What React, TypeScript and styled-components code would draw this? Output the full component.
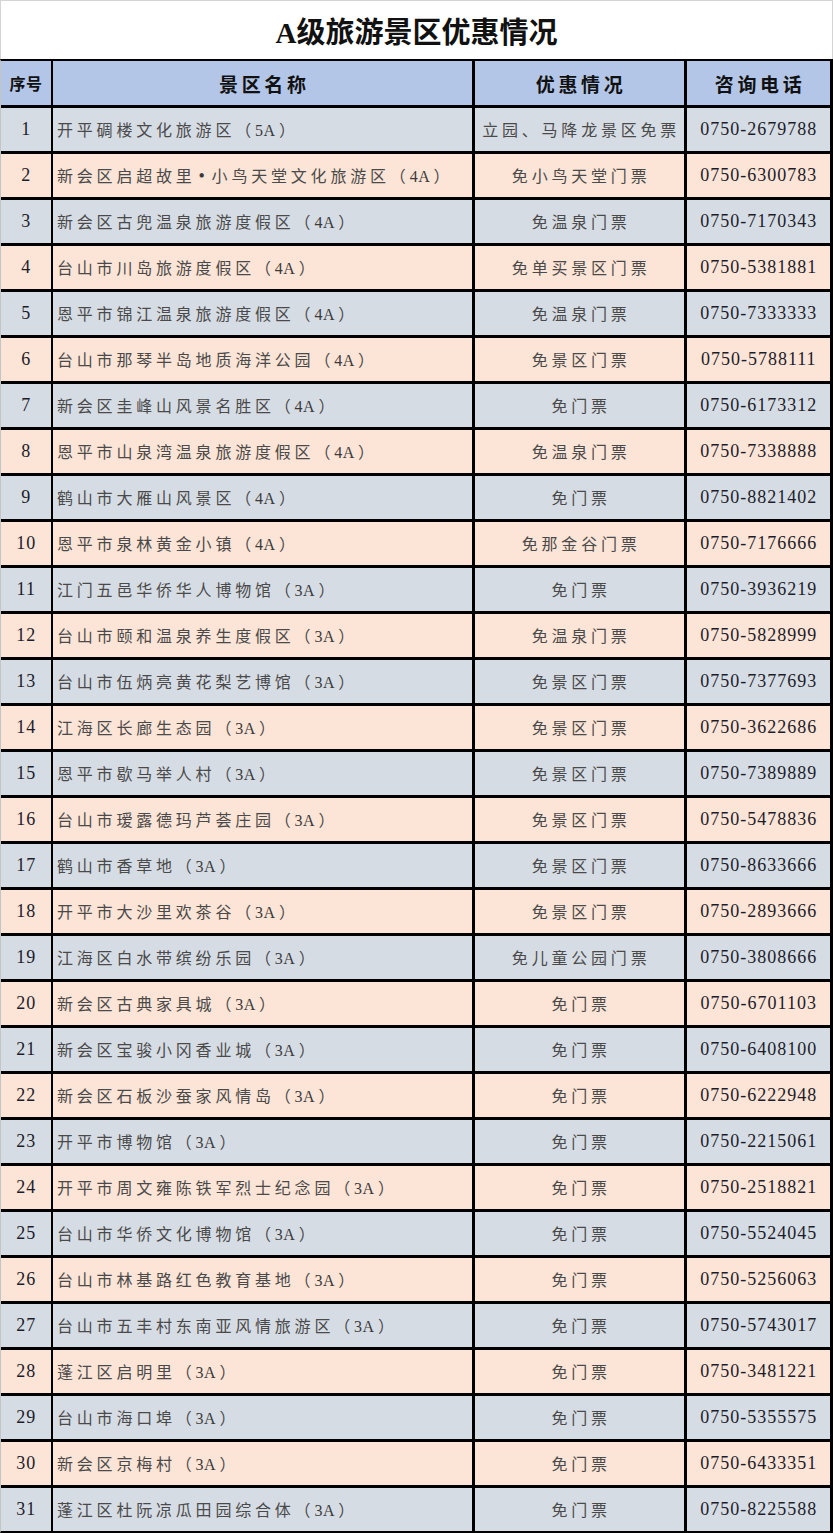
import React from 'react';
import styled, { createGlobalStyle } from 'styled-components';

type Spot = {
  name: string;
  offer: string;
  phone: string;
};

const GlobalStyle = createGlobalStyle`
  html, body {
    margin: 0;
    padding: 0;
    background: #ffffff;
  }
`;

const Page = styled.div`
  width: 833px;
  height: 1533px;
  overflow: hidden;
  font-family: 'Liberation Serif', 'Noto Sans CJK SC', serif;
  background: #ffffff;
`;

const Title = styled.h1`
  margin: 0;
  height: 59px;
  box-sizing: border-box;
  border: 1px solid #d4d4d4;
  border-bottom: none;
  display: flex;
  align-items: center;
  justify-content: center;
  font-size: 29px;
  font-weight: bold;
  color: #111111;
`;

const Table = styled.div`
  display: flex;
  flex-direction: column;
  gap: 2.5px;
  background: #000000;
  border-top: 2.5px solid #000000;
  border-bottom: 2px solid #000000;
  border-left: 1px solid #c4c4c4;
`;

const Row = styled.div<{ height: number }>`
  display: grid;
  grid-template-columns: 49.5px 419px 209.5px 143.5px;
  column-gap: 2.5px;
  height: ${({ height }) => height}px;
  padding-right: 3px;
`;

const Cell = styled.div<{ bg: string; align?: 'left' | 'center' }>`
  background: ${({ bg }) => bg};
  display: flex;
  align-items: center;
  justify-content: ${({ align }) => (align === 'left' ? 'flex-start' : 'center')};
  padding-left: ${({ align }) => (align === 'left' ? '4px' : '0')};
  white-space: nowrap;
  overflow: hidden;
`;

const HeadText = styled.span<{ size: number; spacing: number }>`
  font-size: ${({ size }) => size}px;
  font-weight: bold;
  color: #111111;
  letter-spacing: ${({ spacing }) => spacing}px;
  margin-right: -${({ spacing }) => spacing}px;
`;

const CnText = styled.span`
  font-size: 16px;
  color: #4a4a4a;
  letter-spacing: 3.8px;
`;

const CenteredCn = styled(CnText)`
  margin-right: -3.8px;
`;

const Ascii = styled.span`
  letter-spacing: 0.5px;
  margin-right: 3.3px;
  color: #3a3a3a;
`;

const Dot = styled.span`
  display: inline-block;
  width: 16px;
  text-align: center;
  font-size: 18px;
  line-height: 1;
  color: #3a3a3a;
`;

const NumText = styled.span`
  font-size: 18px;
  color: #1c1c2a;
  letter-spacing: 1px;
  margin-right: -1px;
`;

const HEAD_BG = '#b4c6e7';
const GRAY_BG = '#d6dce4';
const PEACH_BG = '#fce4d6';

const spots: Spot[] = [
  { name: '开平碉楼文化旅游区（5A）', offer: '立园、马降龙景区免票', phone: '0750-2679788' },
  { name: '新会区启超故里•小鸟天堂文化旅游区（4A）', offer: '免小鸟天堂门票', phone: '0750-6300783' },
  { name: '新会区古兜温泉旅游度假区（4A）', offer: '免温泉门票', phone: '0750-7170343' },
  { name: '台山市川岛旅游度假区（4A）', offer: '免单买景区门票', phone: '0750-5381881' },
  { name: '恩平市锦江温泉旅游度假区（4A）', offer: '免温泉门票', phone: '0750-7333333' },
  { name: '台山市那琴半岛地质海洋公园（4A）', offer: '免景区门票', phone: '0750-5788111' },
  { name: '新会区圭峰山风景名胜区（4A）', offer: '免门票', phone: '0750-6173312' },
  { name: '恩平市山泉湾温泉旅游度假区（4A）', offer: '免温泉门票', phone: '0750-7338888' },
  { name: '鹤山市大雁山风景区（4A）', offer: '免门票', phone: '0750-8821402' },
  { name: '恩平市泉林黄金小镇（4A）', offer: '免那金谷门票', phone: '0750-7176666' },
  { name: '江门五邑华侨华人博物馆（3A）', offer: '免门票', phone: '0750-3936219' },
  { name: '台山市颐和温泉养生度假区（3A）', offer: '免温泉门票', phone: '0750-5828999' },
  { name: '台山市伍炳亮黄花梨艺博馆（3A）', offer: '免景区门票', phone: '0750-7377693' },
  { name: '江海区长廊生态园（3A）', offer: '免景区门票', phone: '0750-3622686' },
  { name: '恩平市歇马举人村（3A）', offer: '免景区门票', phone: '0750-7389889' },
  { name: '台山市瑷露德玛芦荟庄园（3A）', offer: '免景区门票', phone: '0750-5478836' },
  { name: '鹤山市香草地（3A）', offer: '免景区门票', phone: '0750-8633666' },
  { name: '开平市大沙里欢茶谷（3A）', offer: '免景区门票', phone: '0750-2893666' },
  { name: '江海区白水带缤纷乐园（3A）', offer: '免儿童公园门票', phone: '0750-3808666' },
  { name: '新会区古典家具城（3A）', offer: '免门票', phone: '0750-6701103' },
  { name: '新会区宝骏小冈香业城（3A）', offer: '免门票', phone: '0750-6408100' },
  { name: '新会区石板沙蚕家风情岛（3A）', offer: '免门票', phone: '0750-6222948' },
  { name: '开平市博物馆（3A）', offer: '免门票', phone: '0750-2215061' },
  { name: '开平市周文雍陈铁军烈士纪念园（3A）', offer: '免门票', phone: '0750-2518821' },
  { name: '台山市华侨文化博物馆（3A）', offer: '免门票', phone: '0750-5524045' },
  { name: '台山市林基路红色教育基地（3A）', offer: '免门票', phone: '0750-5256063' },
  { name: '台山市五丰村东南亚风情旅游区（3A）', offer: '免门票', phone: '0750-5743017' },
  { name: '蓬江区启明里（3A）', offer: '免门票', phone: '0750-3481221' },
  { name: '台山市海口埠（3A）', offer: '免门票', phone: '0750-5355575' },
  { name: '新会区京梅村（3A）', offer: '免门票', phone: '0750-6433351' },
  { name: '蓬江区杜阮凉瓜田园综合体（3A）', offer: '免门票', phone: '0750-8225588' }
];

// split a name so the half-width grade ("4A") and the dot get their own spacing
const renderName = (name: string) =>
  name.split(/([0-9A-Z]+|•)/).map((part, i) => {
    if (part === '•') return <Dot key={i}>•</Dot>;
    if (/^[0-9A-Z]+$/.test(part)) return <Ascii key={i}>{part}</Ascii>;
    return part;
  });

const App: React.FC = () => (
  <Page>
    <GlobalStyle />
    <Title>A级旅游景区优惠情况</Title>
    <Table>
      <Row height={44}>
        <Cell bg={HEAD_BG}>
          <HeadText size={16} spacing={0.5}>序号</HeadText>
        </Cell>
        <Cell bg={HEAD_BG}>
          <HeadText size={19} spacing={3.7}>景区名称</HeadText>
        </Cell>
        <Cell bg={HEAD_BG}>
          <HeadText size={19} spacing={3.7}>优惠情况</HeadText>
        </Cell>
        <Cell bg={HEAD_BG}>
          <HeadText size={19} spacing={3.7}>咨询电话</HeadText>
        </Cell>
      </Row>
      {spots.map((spot, i) => {
        const bg = i % 2 === 0 ? GRAY_BG : PEACH_BG;
        return (
          <Row key={spot.phone} height={43.5}>
            <Cell bg={bg}>
              <NumText>{i + 1}</NumText>
            </Cell>
            <Cell bg={bg} align="left">
              <CnText>{renderName(spot.name)}</CnText>
            </Cell>
            <Cell bg={bg}>
              <CenteredCn>{spot.offer}</CenteredCn>
            </Cell>
            <Cell bg={bg}>
              <NumText>{spot.phone}</NumText>
            </Cell>
          </Row>
        );
      })}
    </Table>
  </Page>
);

export default App;
